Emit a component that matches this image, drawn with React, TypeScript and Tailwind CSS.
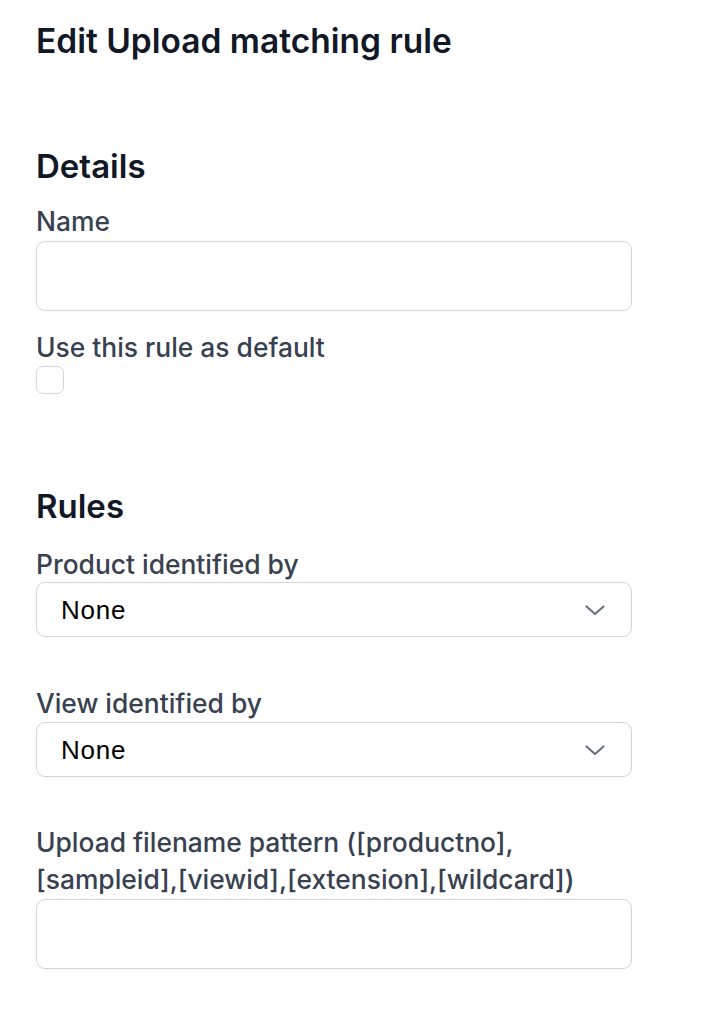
import React from "react";

function Chevron() {
  return (
    <svg width="24" height="24" viewBox="0 0 24 24" fill="none" className="shrink-0">
      <path d="M3.5 8.5L12 16l8.5-7.5" stroke="#6b7280" strokeWidth="2.2" strokeLinecap="round" strokeLinejoin="round" />
    </svg>
  );
}

function Select() {
  return (
    <div className="flex h-[55px] w-[596px] items-center justify-between rounded-[9px] border border-[#d1d5db] bg-white pl-[24px] pr-[24px]">
      <span className="text-[26px] leading-none tracking-[0.03em] text-black" style={{ fontFamily: '"Liberation Sans", Arial, sans-serif' }}>None</span>
      <Chevron />
    </div>
  );
}

export default function App() {
  return (
    <div className="min-h-[1024px] w-[718px] bg-white pl-[36px] pt-[20px]" style={{ fontFamily: 'Inter, "Noto Sans", sans-serif' }}>
      <h1 className="text-[33.5px] leading-[42px] font-semibold text-[#111827]">Edit Upload matching rule</h1>

      <h2 className="mt-[83px] text-[33px] leading-[42px] font-semibold text-[#111827]">Details</h2>
      <label className="mt-[16px] block text-[26.4px] leading-[36px] font-medium text-[#374151]">Name</label>
      <div className="mt-[2px] h-[70px] w-[596px] rounded-[9px] border border-[#d1d5db] bg-white" />

      <label className="mt-[18px] block text-[26.4px] leading-[36px] font-medium text-[#374151]">Use this rule as default</label>
      <div className="mt-[1px] h-[28px] w-[28px] rounded-[7px] border border-[#d1d5db] bg-white" />

      <h2 className="mt-[91px] text-[33px] leading-[42px] font-semibold text-[#111827]">Rules</h2>
      <label className="mt-[19px] block text-[26.4px] leading-[36px] font-medium text-[#374151]">Product identified by</label>
      <div className="mt-0">
        <Select />
      </div>

      <label className="mt-[48px] block text-[26.4px] leading-[36px] font-medium text-[#374151]">View identified by</label>
      <div className="mt-[1px]">
        <Select />
      </div>

      <label className="mt-[47px] block w-[620px] text-[26.4px] leading-[37px] font-medium text-[#374151]">
        Upload filename pattern ([productno],
        <br />
        [sampleid],[viewid],[extension],[wildcard])
      </label>
      <div className="mt-[1px] h-[70px] w-[596px] rounded-[9px] border border-[#d1d5db] bg-white" />
    </div>
  );
}
